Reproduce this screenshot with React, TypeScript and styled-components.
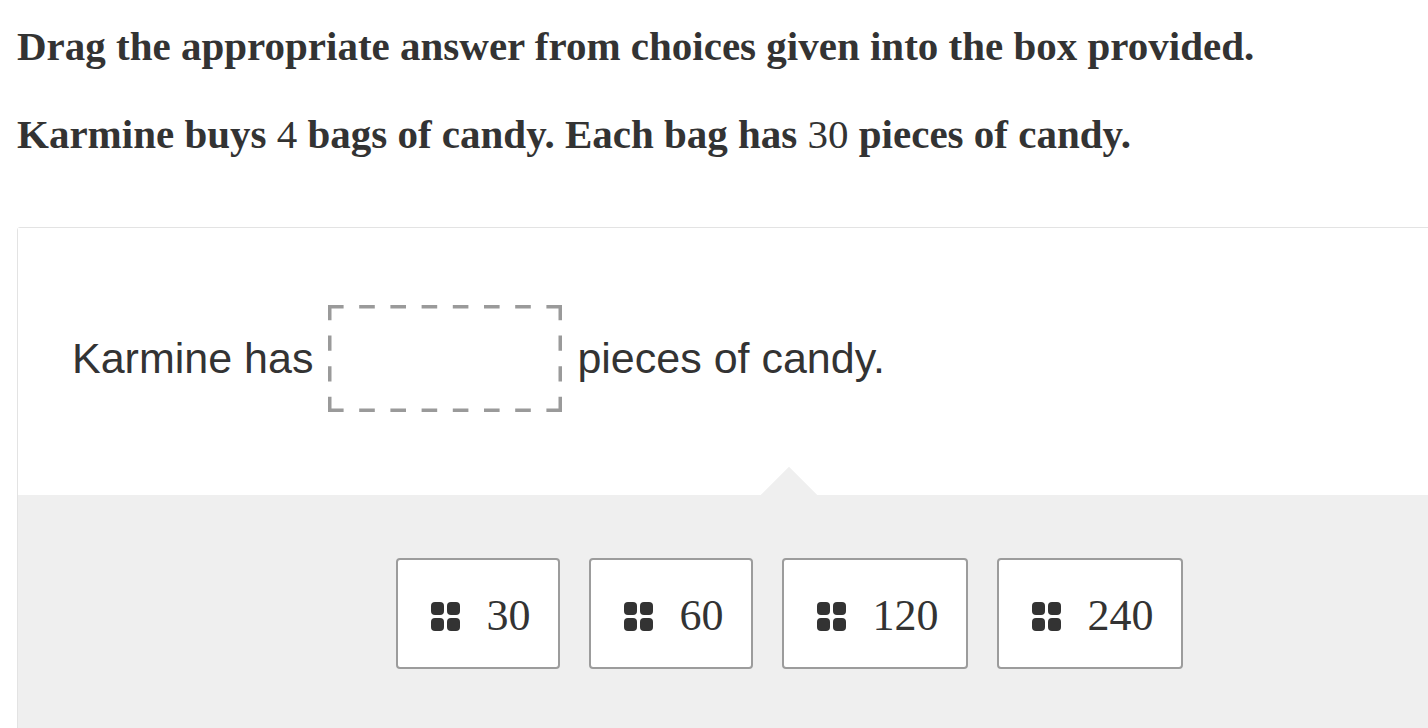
import React, { FC } from 'react'
import styled, { createGlobalStyle } from 'styled-components'

const GlobalStyle = createGlobalStyle`
  html, body {
    margin: 0;
    padding: 0;
    background: #fff;
    overflow: hidden;
  }
`

const Page = styled.div`
  width: 1428px;
  height: 728px;
  overflow: hidden;
  padding-left: 17px;
  box-sizing: border-box;
  color: #333;
`

const Prompt = styled.p<{ $top: number }>`
  margin: 0;
  font-family: 'Liberation Serif', 'Times New Roman', serif;
  font-weight: 700;
  font-size: 41px;
  line-height: 48px;
  padding-top: ${({ $top }) => $top}px;
  white-space: nowrap;
`

const MathNum = styled.span`
  font-weight: 400;
`

const Panel = styled.div`
  margin-top: 69px;
  width: 1544px;
  border: 1px solid #e3e3e3;
  border-radius: 3px;
  box-sizing: border-box;
`

const Statement = styled.div`
  position: relative;
  height: 267px;
  display: flex;
  align-items: center;
  padding: 0 0 6px 54px;
  box-sizing: border-box;
  font-family: 'Liberation Sans', Arial, sans-serif;
  font-size: 43px;
  color: #333;
  background: #fff;

  &::after {
    content: '';
    position: absolute;
    left: 751px;
    bottom: -20px;
    width: 40px;
    height: 40px;
    background: #efefef;
    transform: rotate(45deg);
  }
`

const DropBox = styled.span`
  display: block;
  width: 234px;
  height: 107px;
  margin: 0 15px;
  flex: none;

  svg {
    display: block;
  }
`

const Tray = styled.div`
  position: relative;
  z-index: 1;
  background: #efefef;
  height: 300px;
  display: flex;
  justify-content: center;
  align-items: flex-start;
  gap: 29px;
  padding-top: 63px;
  box-sizing: border-box;
`

const Choice = styled.div<{ $width: number }>`
  width: ${({ $width }) => $width}px;
  height: 111px;
  box-sizing: border-box;
  background: #fff;
  border: 2px solid #9c9c9c;
  border-radius: 4px;
  display: flex;
  align-items: center;
  justify-content: center;
  gap: 27px;
  padding: 4px 0 0 6px;
  font-family: 'Liberation Serif', 'Times New Roman', serif;
  font-size: 44px;
  color: #333;
`

const Grip = styled.span`
  display: grid;
  grid-template-columns: 13px 13px;
  grid-template-rows: 13px 13px;
  gap: 3px;
  margin-top: 2px;

  & > i {
    background: #333;
    border-radius: 4px;
  }
`

const DashedFrame: FC<{ w: number; h: number }> = ({ w, h }) => {
  const t = 3.5
  const dx = w / 15
  const dy = h / 7
  return (
    <svg width={w} height={h} viewBox={`0 0 ${w} ${h}`}>
      <g stroke="#9a9a9a" strokeWidth={t} fill="none" strokeLinecap="butt">
        <line x1={0} y1={t / 2} x2={w} y2={t / 2} strokeDasharray={`${dx} ${dx}`} />
        <line x1={0} y1={h - t / 2} x2={w} y2={h - t / 2} strokeDasharray={`${dx} ${dx}`} />
        <line x1={t / 2} y1={0} x2={t / 2} y2={h} strokeDasharray={`${dy} ${dy}`} />
        <line x1={w - t / 2} y1={0} x2={w - t / 2} y2={h} strokeDasharray={`${dy} ${dy}`} />
      </g>
    </svg>
  )
}

const choices = [
  { value: '30', width: 164 },
  { value: '60', width: 164 },
  { value: '120', width: 186 },
  { value: '240', width: 186 },
]

const App: FC = () => (
  <Page>
    <GlobalStyle />
    <Prompt $top={22}>Drag the appropriate answer from choices given into the box provided.</Prompt>
    <Prompt $top={40}>
      Karmine buys <MathNum>4</MathNum> bags of candy. Each bag has <MathNum>30</MathNum> pieces of candy.
    </Prompt>
    <Panel>
      <Statement>
        Karmine has
        <DropBox>
          <DashedFrame w={234} h={107} />
        </DropBox>
        pieces of candy.
      </Statement>
      <Tray>
        {choices.map((c) => (
          <Choice key={c.value} $width={c.width}>
            <Grip>
              <i />
              <i />
              <i />
              <i />
            </Grip>
            {c.value}
          </Choice>
        ))}
      </Tray>
    </Panel>
  </Page>
)

export default App
